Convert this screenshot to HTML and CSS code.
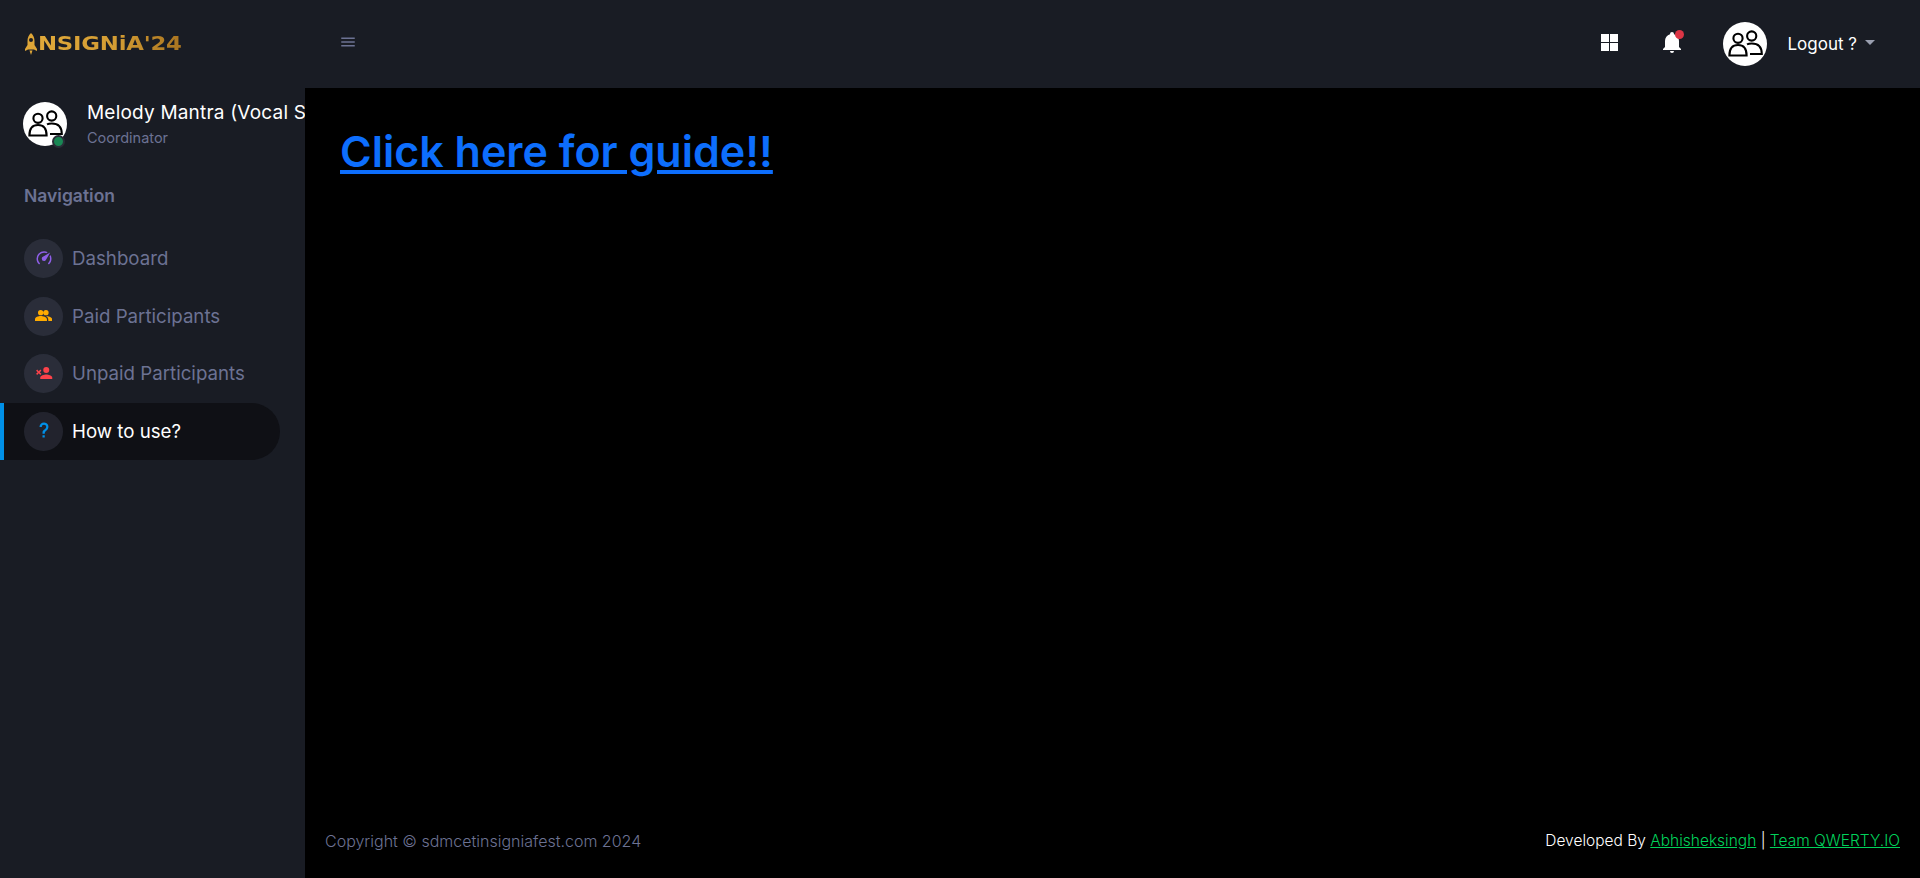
FILE: index.html
```html
<!DOCTYPE html>
<html lang="en">
<head>
<meta charset="utf-8">
<title>Insignia'24</title>
<link rel="stylesheet" href="styles.css">
</head>
<body>
<svg class="defs" width="0" height="0" aria-hidden="true">
  <symbol id="people" viewBox="0 0 44 44">
    <circle cx="28.7" cy="14" r="4.6" fill="none" stroke="#000" stroke-width="2.100"/>
    <path d="M27 32H38.8C38.8 25 35 21.5 28.7 21.5C26.8 21.5 25.2 21.8 24 22.4" fill="#fff" stroke="#000" stroke-width="2.100"/>
    <circle cx="15" cy="16.3" r="4.6" fill="#fff" stroke="#000" stroke-width="2.100"/>
    <path d="M6.4 33.5H23.6C23.6 26.5 20.5 23 15 23C9.5 23 6.4 26.5 6.4 33.5Z" fill="#fff" stroke="#000" stroke-width="2.100"/>
  </symbol>
</svg>
<div class="app">
  <aside class="sidebar">
    <div class="brand">
      <svg class="rocket" viewBox="0 0 12 22"><path d="M6 0C8.5 2 9.5 5 9.5 8V12L12 16V18L9 16.5H3L0 18V16L2.500 12V8C2.500 5 3.500 2 6 0ZM6 5A2 2 0 1 0 6 9A2 2 0 1 0 6 5ZM4.500 17.500H7.500L6 22Z" fill="#dfa637" fill-rule="evenodd"/></svg>
      <span class="brand-text">NSIGNiA'24</span>
    </div>
    <div class="profile">
      <div class="avatar-wrap">
        <svg class="avatar"><use href="#people"/></svg>
        <span class="online"></span>
      </div>
      <div class="profile-text">
        <div class="profile-name">Melody Mantra (Vocal Solo)</div>
        <div class="profile-role">Coordinator</div>
      </div>
    </div>
    <div class="nav-title">Navigation</div>
    <nav class="nav">
      <a class="nav-item">
        <span class="nav-icon"><svg viewBox="0 0 24 24"><path class="i-purple" d="M12,16A3,3 0 0,1 9,13C9,11.88 9.61,10.9 10.5,10.39L20.21,4.77L14.68,14.35C14.18,15.33 13.17,16 12,16M12,3C13.81,3 15.5,3.5 16.97,4.32L14.87,5.53C14,5.19 13,5 12,5A8,8 0 0,0 4,13C4,15.21 4.89,17.21 6.34,18.65H6.35C6.74,19.04 6.74,19.67 6.35,20.06C5.96,20.45 5.32,20.45 4.93,20.07V20.07C3.12,18.26 2,15.76 2,13A10,10 0 0,1 12,3M22,13C22,15.76 20.88,18.26 19.07,20.07V20.07C18.68,20.45 18.05,20.45 17.66,20.06C17.27,19.67 17.27,19.04 17.66,18.65V18.65C19.11,17.2 20,15.2 20,13C20,12 19.81,11 19.46,10.1L20.67,8C21.5,9.5 22,11.18 22,13Z"/></svg></span>
        <span>Dashboard</span>
      </a>
      <a class="nav-item">
        <span class="nav-icon"><svg class="paid-icon" viewBox="0 0 52 34"><path class="i-yellow" d="M17 0A8 8 0 1 1 17 16A8 8 0 1 1 17 0ZM33 0A8 8 0 1 1 33 16A8 8 0 1 1 33 0ZM0 34V28C0 21 10 18 17 18C24 18 36 21 36 28V34ZM40 34H52V29C52 22 42 18 33 18C38 21 40 25 40 29Z"/></svg></span>
        <span>Paid Participants</span>
      </a>
      <a class="nav-item">
        <span class="nav-icon"><svg viewBox="0 0 24 24"><path class="i-red" d="M15,14C17.67,14 23,15.33 23,18V20H7V18C7,15.33 12.33,14 15,14M15,12A4,4 0 0,1 11,8A4,4 0 0,1 15,4A4,4 0 0,1 19,8A4,4 0 0,1 15,12M5,9.59L7.12,7.46L8.54,8.88L6.41,11L8.54,13.12L7.12,14.54L5,12.41L2.88,14.54L1.46,13.12L3.59,11L1.46,8.88L2.88,7.46L5,9.59Z"/></svg></span>
        <span>Unpaid Participants</span>
      </a>
      <a class="nav-item active">
        <span class="nav-icon"><svg viewBox="0 0 24 24"><path class="i-blue" d="M10,19H13V22H10V19M12,2C17.35,2.220 19.680,7.620 16.500,11.670C15.670,12.670 14.330,13.330 13.670,14.170C13,15 13,16 13,17H10C10,15.330 10,13.920 10.670,12.920C11.330,11.920 12.670,11.330 13.500,10.670C15.920,8.430 15.320,5.260 12,5A3,3 0 0,0 9,8H6A6,6 0 0,1 12,2Z"/></svg></span>
        <span>How to use?</span>
      </a>
    </nav>
  </aside>
  <div class="main">
    <header class="topbar">
      <svg class="menu-icon" viewBox="0 0 24 24"><path d="M3,6H21V8H3V6M3,11H21V13H3V11M3,16H21V18H3V16Z"/></svg>
      <div class="top-right">
        <svg class="grid-icon" viewBox="0 0 17 17"><path d="M0 0H8V8H0ZM9 0H17V8H9ZM0 9H8V17H0ZM9 9H17V17H9Z"/></svg>
        <span class="bell">
          <svg viewBox="0 0 24 24"><path d="M21,19V20H3V19L5,17V11C5,7.900 7.030,5.170 10,4.290C10,4.190 10,4.100 10,4A2,2 0 0,1 12,2A2,2 0 0,1 14,4C14,4.100 14,4.190 14,4.290C16.970,5.170 19,7.900 19,11V17L21,19M14,21A2,2 0 0,1 12,23A2,2 0 0,1 10,21"/></svg>
          <span class="bell-dot"></span>
        </span>
        <svg class="avatar top-avatar"><use href="#people"/></svg>
        <span class="logout">Logout ?</span>
        <span class="caret"></span>
      </div>
    </header>
    <main class="content">
      <a class="guide">Click here for guide!!</a>
    </main>
    <footer class="footer">
      <span class="copyright">Copyright © sdmcetinsigniafest.com 2024</span>
      <span class="credit">Developed By <a>Abhisheksingh</a> | <a>Team QWERTY.IO</a></span>
    </footer>
  </div>
</div>
</body>
</html>
```
FILE: styles.css
```css
* { box-sizing: border-box; }
html, body { margin: 0; height: 100%; }
body {
  background: #000;
  color: #fff;
  font-family: Inter, "Noto Sans", sans-serif;
  overflow: hidden;
}
.defs { display: block; height: 0; }
.app { display: flex; height: 878px; }

.sidebar {
  width: 305px;
  flex: none;
  background: #191c24;
  overflow: hidden;
}
.brand {
  height: 88px;
  padding: 33px 0 0 25px;
  display: flex;
  align-items: flex-start;
  gap: 1px;
}
.rocket { width: 12px; height: 22px; flex: none; }
.brand-text {
  font-family: "DejaVu Sans", sans-serif;
  font-weight: 700;
  font-size: 19.500px;
  line-height: 22px;
  letter-spacing: -0.200px;
  white-space: nowrap;
  transform: scaleX(1.17);
  transform-origin: left center;
  background: linear-gradient(90deg, #e0a93a, #d39c33 55%, #a97420);
  -webkit-background-clip: text;
  background-clip: text;
  color: transparent;
}
.profile {
  display: flex;
  align-items: flex-start;
  padding: 14px 0 0 23px;
  gap: 20px;
}
.avatar-wrap { position: relative; width: 44px; height: 44px; flex: none; }
.avatar {
  display: block;
  width: 44px;
  height: 44px;
  border-radius: 50%;
  background: #fff;
}
.online {
  position: absolute;
  right: 2px;
  bottom: -1.500px;
  width: 13px;
  height: 13px;
  border-radius: 50%;
  background: #198754;
  border: 2px solid #2a2e38;
}
.profile-text { white-space: nowrap; margin-top: -1px; }
.profile-name { font-size: 19px; line-height: 24px; letter-spacing: 0.200px; }
.profile-role { font-size: 14.500px; line-height: 18px; color: #6c7293; margin-top: 4px; }
.nav-title {
  font-size: 17.500px;
  font-weight: 600;
  line-height: 20px;
  color: #6c7293;
  padding: 39px 0 0 24px;
}
.nav { display: flex; flex-direction: column; margin-top: 24px; }
.nav-item {
  display: flex;
  align-items: center;
  gap: 9px;
  height: 57.500px;
  width: 280px;
  padding-left: 24px;
  font-size: 18.700px;
  color: #6c7293;
  border-radius: 0 29px 29px 0;
}
.nav-item.active {
  background: #0f1015;
  color: #fff;
  border-left: 4px solid #0090e7;
  padding-left: 20px;
}
.nav-icon {
  width: 39px;
  height: 39px;
  flex: none;
  border-radius: 50%;
  background: rgba(108, 114, 147, 0.2);
  display: flex;
  align-items: center;
  justify-content: center;
}
.nav-icon svg { width: 18px; height: 18px; display: block; margin-top: -2px; }
.nav-icon .paid-icon { width: 17.300px; height: 11.300px; }
.i-purple { fill: #8f5fe8; }
.i-yellow { fill: #ffab00; }
.i-red { fill: #fc424a; }
.i-blue { fill: #0090e7; }

.main { flex: 1; display: flex; flex-direction: column; min-width: 0; }
.topbar {
  height: 88px;
  flex: none;
  background: #191c24;
  display: flex;
  align-items: center;
  justify-content: space-between;
  padding: 0 45px 0 35px;
}
.menu-icon { width: 18px; height: 18px; fill: #6c7293; margin-top: -4px; margin-left: -1px; }
.top-right { display: flex; align-items: center; }
.grid-icon { width: 17px; height: 17px; fill: #fff; margin-top: -4px; }
.bell { position: relative; width: 24px; height: 24px; margin-left: 42px; margin-top: -4px; }
.bell svg { display: block; width: 24px; height: 24px; fill: #fff; }
.bell-dot {
  position: absolute;
  top: 0;
  right: 0;
  width: 9px;
  height: 9px;
  border-radius: 50%;
  background: #dc3545;
}
.top-avatar { margin-left: 39px; }
.logout { font-size: 17px; margin-left: 20px; }
.caret {
  width: 0;
  height: 0;
  margin: -4px 0 0 8px;
  border-left: 5px solid transparent;
  border-right: 5px solid transparent;
  border-top: 5px solid #9a9fb0;
}

.content { flex: 1; padding: 37px 35px; }
.guide {
  font-size: 43px;
  font-weight: 600;
  line-height: 52px;
  color: #0d6efd;
  text-decoration: underline;
}
.footer {
  flex: none;
  height: 74px;
  padding: 0 20px;
  display: flex;
  justify-content: space-between;
  align-items: center;
  font-weight: 300;
  line-height: 24px;
}
.copyright { color: #6c7293; font-size: 16px; }
.credit { font-size: 15.500px; }
.credit a { color: #00d25b; text-decoration: underline; }
```
